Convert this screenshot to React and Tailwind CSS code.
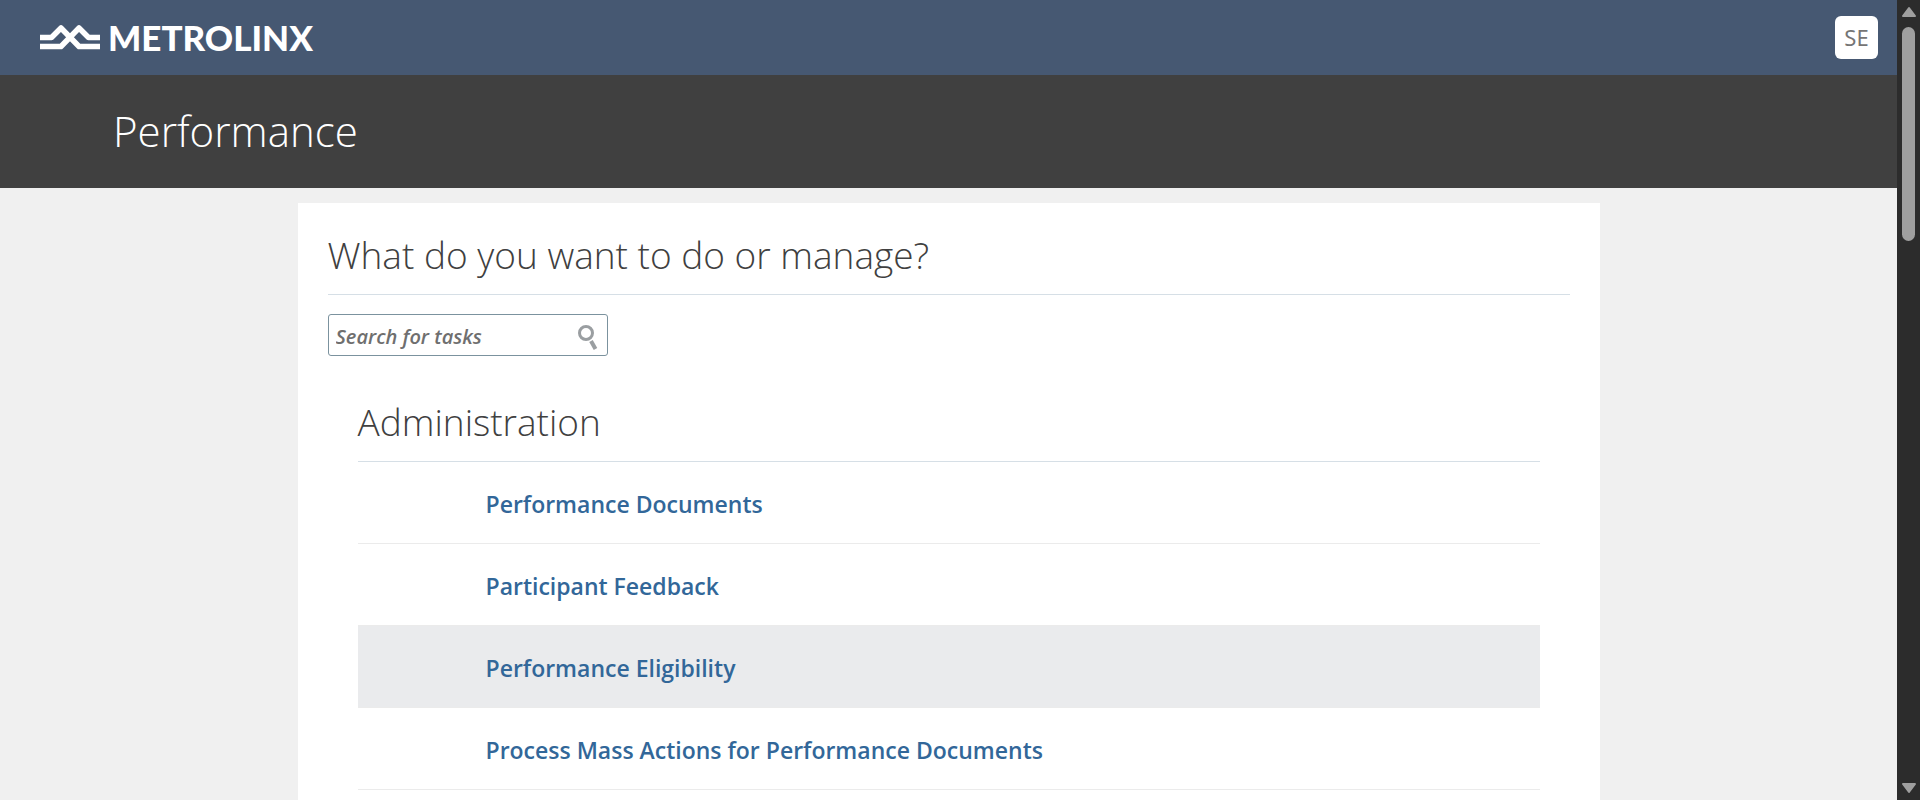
const tasks = [
  { label: 'Performance Documents' },
  { label: 'Participant Feedback' },
  { label: 'Performance Eligibility', active: true },
  { label: 'Process Mass Actions for Performance Documents' },
];

function Logo() {
  return (
    <a href="#home" aria-label="Metrolinx home" className="flex items-center gap-[7px] pb-[2px] text-white">
      <svg className="h-[26px] w-[62px]" viewBox="0 0 62 26" fill="none" stroke="currentColor" strokeWidth="5.5" aria-hidden="true">
        <path d="M1 13.500H12.500L22 4L40 22.500H61" strokeLinejoin="round" />
        <path d="M1 22.500H22L40 4L49.500 13.500H61" strokeLinejoin="round" />
      </svg>
      <span className="font-[Lato,sans-serif] text-[35px] leading-10 font-black">METROLINX</span>
    </a>
  );
}

function Header() {
  return (
    <header className="flex h-[75px] items-center justify-between bg-[#465872] pr-[19px] pl-[39px]">
      <Logo />
      <button
        type="button"
        aria-label="User menu"
        className="size-[43px] rounded-md bg-white font-['Noto_Sans',sans-serif] text-[22px] text-[#757575]"
      >
        SE
      </button>
    </header>
  );
}

function Search() {
  return (
    <form className="mt-[19px] flex h-[42px] w-[280px] items-center rounded-[3px] border border-[#7b929e] bg-white pr-2 pl-[7px]">
      <input
        type="text"
        aria-label="Search for tasks"
        placeholder="Search for tasks"
        className="min-w-0 flex-1 pt-1 text-[20px] font-semibold italic outline-none placeholder:text-[#6f6f6f] placeholder:opacity-100"
      />
      <button type="button" aria-label="Search" className="pt-1 text-[#9a9ea1]">
        <svg className="h-[26px] w-6" viewBox="0 0 24 26" fill="none" stroke="currentColor" aria-hidden="true">
          <circle cx="11" cy="9" r="6.500" strokeWidth="3" />
          <path d="M16 17L20.500 25" strokeWidth="4" />
        </svg>
      </button>
    </form>
  );
}

function TaskList() {
  return (
    <section className="mx-[30px] mt-[38px]">
      <h2 className="border-b border-[#d6dfe6] pb-[11px] text-[37px] leading-[56px] font-light">Administration</h2>
      <ul>
        {tasks.map((task) => (
          <li
            key={task.label}
            className={
              task.active
                ? 'flex h-[82px] items-center border-b border-[#ebebeb] bg-[#eaebed] pt-1 pl-32'
                : 'flex h-[82px] items-center border-b border-[#ebebeb] pt-1 pl-32'
            }
          >
            <a href="#task" className="text-[23px] font-semibold text-[#326799]">
              {task.label}
            </a>
          </li>
        ))}
      </ul>
    </section>
  );
}

function ScrollBar() {
  return (
    <div aria-hidden="true" className="flex w-[23px] shrink-0 flex-col items-center bg-[#2c2c2c] pt-1.5 pb-1.5 text-[#9f9f9f]">
      <svg className="h-3 w-4" viewBox="0 0 16 12" fill="currentColor" stroke="currentColor" strokeWidth="2" strokeLinejoin="round">
        <path d="M8 2L14 10H2Z" />
      </svg>
      <div className="mt-[9px] h-[214px] w-[13px] rounded-full bg-[#9f9f9f]" />
      <svg className="mt-auto h-3 w-4" viewBox="0 0 16 12" fill="currentColor" stroke="currentColor" strokeWidth="2" strokeLinejoin="round">
        <path d="M8 10L14 2H2Z" />
      </svg>
    </div>
  );
}

export default function App() {
  return (
    <div className="flex h-screen overflow-hidden bg-[#f0f0f0] font-['Open_Sans','Noto_Sans',sans-serif] text-[#404040]">
      <div className="min-w-0 flex-1">
        <Header />
        <div className="flex h-[113px] items-center bg-[#404040] px-[113px]">
          <h1 className="pb-[2px] text-[42px] leading-none font-light text-white">Performance</h1>
        </div>
        <main className="mx-auto mt-[15px] min-h-screen w-full max-w-[1302px] bg-white px-[30px] pt-6">
          <h2 className="border-b border-[#d6dfe6] pb-[11px] text-[37px] leading-[56px] font-light">
            What do you want to do or manage?
          </h2>
          <Search />
          <TaskList />
        </main>
      </div>
      <ScrollBar />
    </div>
  );
}
